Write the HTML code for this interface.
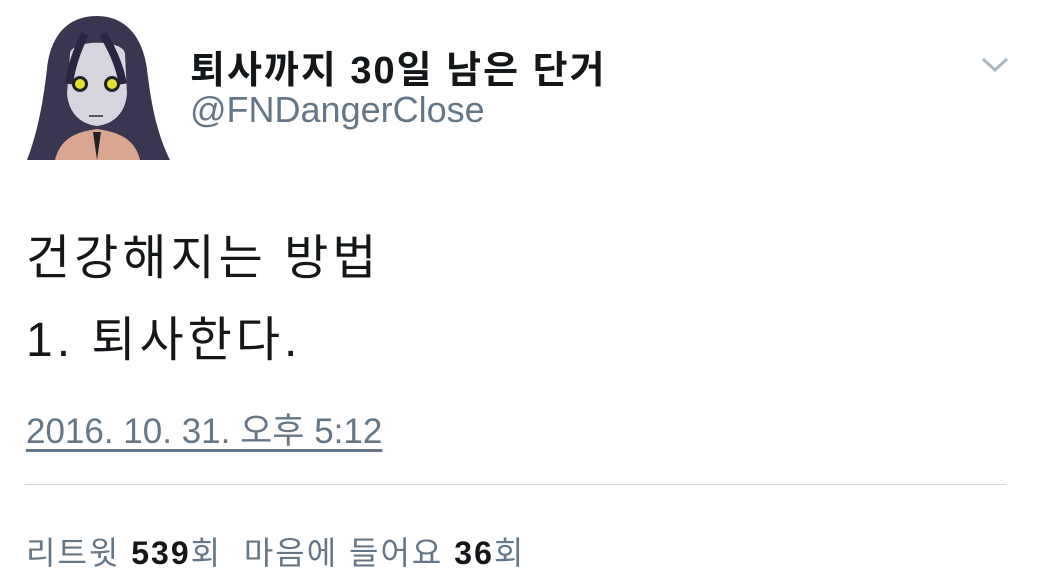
<!DOCTYPE html>
<html><head><meta charset="utf-8"><style>
body{margin:0;width:1046px;height:584px;background:#fff;overflow:hidden;position:relative;font-family:"Liberation Sans","Noto Sans CJK KR",sans-serif}
.a{position:absolute;white-space:nowrap}
</style></head><body>
<svg class="a" style="left:25px;top:14px" width="145" height="148" viewBox="0 0 145 148">
<path d="M72 2 C40 2 25 25 22 55 C18 90 12 120 2 146 L145 146 C132 120 126 90 122 55 C118 25 102 2 72 2Z" fill="#3a3550"/>
<path d="M30 146 C35 125 50 118 72 115 C94 118 110 125 115 146Z" fill="#d9a690"/>
<path d="M45 40 C45 25 100 25 100 40 L102 80 C100 100 88 110 72 112 C56 110 44 100 42 80Z" fill="#d8d4e0"/>
<path d="M60 20 C50 40 46 55 44 70 M78 20 C90 40 95 55 98 70" stroke="#2a2540" stroke-width="8" fill="none"/>
<circle cx="55" cy="70" r="8" fill="#222"/><circle cx="55" cy="70" r="5" fill="#e8e030"/>
<circle cx="87" cy="70" r="8" fill="#222"/><circle cx="87" cy="70" r="5" fill="#e8e030"/>
<path d="M64 102 L78 102" stroke="#555" stroke-width="2"/>
<path d="M68 118 L72 146 L76 118Z" fill="#222"/>
</svg>
<div class="a" style="left:190px;top:39px;font-size:38px;letter-spacing:2px;font-weight:bold;color:#14171a">퇴사까지 30일 남은 단거</div>
<div class="a" style="left:190px;top:89px;font-size:36px;color:#657786">@FNDangerClose</div>
<svg class="a" style="left:980px;top:55px" width="30" height="20" viewBox="0 0 30 20"><path d="M3 4 L15 15 L27 4" stroke="#aab8c2" stroke-width="3" fill="none"/></svg>
<div class="a" style="left:26px;top:218px;font-size:48px;letter-spacing:4px;color:#14171a;line-height:82px">건강해지는 방법<br>1. 퇴사한다.</div>
<div class="a" style="left:26px;top:403px;font-size:35px;color:#657786;text-decoration:underline;text-underline-offset:6px">2016. 10. 31. 오후 5:12</div>
<div class="a" style="left:25px;top:484px;width:981px;height:1px;background:#d4d9de"></div>
<div class="a" style="left:26px;top:528px;font-size:32px;letter-spacing:2px;color:#657786">리트윗 <b style="color:#14171a">539</b>회&nbsp;&nbsp;마음에 들어요 <b style="color:#14171a">36</b>회</div>
</body></html>
